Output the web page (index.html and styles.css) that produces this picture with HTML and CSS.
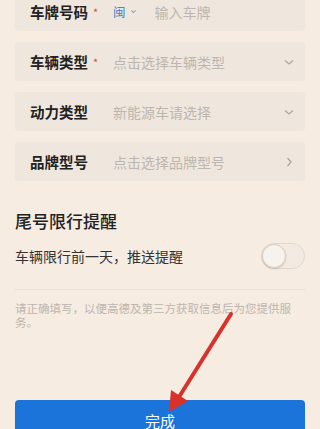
FILE: index.html
```html
<!DOCTYPE html>
<html lang="zh-CN">
  <head>
    <meta charset="UTF-8" />
    <meta name="viewport" content="width=device-width, initial-scale=1.0" />
    <title>车辆信息</title>
    <link rel="stylesheet" href="styles.css">
  </head>
  <body>
    <main class="page">
      <div class="form-list">
        <div class="form-row">
          <span class="form-label">车牌号码<i class="required">*</i></span>
          <span class="plate-prefix">闽
            <svg class="mini-arrow" viewBox="0 0 8 8" width="7" height="7"><path d="M1.5 2.8 L4 5.3 L6.5 2.8" fill="none" stroke="#8aa6c8" stroke-width="1.2"/></svg>
          </span>
          <span class="form-value">输入车牌</span>
        </div>
        <div class="form-row">
          <span class="form-label">车辆类型<i class="required">*</i></span>
          <span class="form-value">点击选择车辆类型</span>
          <svg class="row-icon" viewBox="0 0 12 12" width="12" height="12"><path d="M2 4.5 L6 8 L10 4.5" fill="none" stroke="#aea69d" stroke-width="1.3"/></svg>
        </div>
        <div class="form-row">
          <span class="form-label">动力类型</span>
          <span class="form-value">新能源车请选择</span>
          <svg class="row-icon" viewBox="0 0 12 12" width="12" height="12"><path d="M2 4.5 L6 8 L10 4.5" fill="none" stroke="#aea69d" stroke-width="1.3"/></svg>
        </div>
        <div class="form-row">
          <span class="form-label">品牌型号</span>
          <span class="form-value">点击选择品牌型号</span>
          <svg class="row-icon" viewBox="0 0 12 12" width="12" height="12"><path d="M4.5 2 L8 6 L4.5 10" fill="none" stroke="#aea69d" stroke-width="1.3"/></svg>
        </div>
      </div>

      <h2 class="section-title">尾号限行提醒</h2>
      <div class="switch-row">
        <span>车辆限行前一天，推送提醒</span>
        <span class="switch"><span class="switch-knob"></span></span>
      </div>

      <p class="note">请正确填写，以便高德及第三方获取信息后为您提供服务。</p>

      <button class="submit-button">完成</button>
    </main>

    <svg class="annotation" viewBox="0 0 320 429" width="320" height="429">
      <line x1="231" y1="314" x2="179" y2="397" stroke="#d8322b" stroke-width="4" stroke-linecap="round"/>
      <polygon points="169,412 171,390 188,401" fill="#d8322b"/>
    </svg>
  </body>
</html>
```

FILE: styles.css
```css
* {
  margin: 0;
  padding: 0;
  box-sizing: border-box;
}

:root {
  --bg: #f6ece2;
  --row-bg: #efe7dd;
  --text: #222222;
  --muted: #bdb6ae;
  --blue: #1a74d9;
  --red: #e0483f;
}

body {
  width: 320px;
  height: 429px;
  overflow: hidden;
  position: relative;
  background-color: var(--bg);
  color: var(--text);
  font-family: "Noto Sans CJK SC", "Noto Sans", sans-serif;
}

.page {
  padding: 0 15px;
}

.form-list {
  display: flex;
  flex-direction: column;
  gap: 11px;
  margin-top: -8px;
}

.form-row {
  height: 39px;
  display: flex;
  align-items: center;
  padding: 0 10px 0 15px;
  background-color: var(--row-bg);
  border-radius: 3px;
}

.form-label {
  width: 83px;
  flex-shrink: 0;
  font-size: 14.5px;
  font-weight: bold;
  color: var(--text);
  display: flex;
  align-items: center;
}

.required {
  font-style: normal;
  color: var(--red);
  font-size: 11px;
  font-weight: normal;
  margin-left: 5px;
}

.plate-prefix {
  display: flex;
  align-items: center;
  gap: 4px;
  color: #4a86c8;
  font-size: 12.5px;
  margin-right: 18px;
}

.form-value {
  flex: 1;
  font-size: 14px;
  color: var(--muted);
}

.row-icon {
  flex-shrink: 0;
}

.section-title {
  margin-top: 27px;
  font-size: 17px;
  font-weight: 500;
  line-height: 26px;
}

.switch-row {
  margin-top: 9px;
  display: flex;
  align-items: center;
  justify-content: space-between;
  font-size: 14px;
  color: #333333;
  padding-bottom: 20px;
  border-bottom: 1px solid #e9dfd4;
}

.switch {
  width: 44px;
  height: 26px;
  border-radius: 13px;
  border: 1px solid #e1d8ce;
  background-color: #f3ebe2;
  display: flex;
  align-items: center;
}

.switch-knob {
  width: 24px;
  height: 24px;
  border-radius: 50%;
  background-color: #f8f2ec;
  border: 1px solid #d8cfc5;
  box-shadow: 0 1px 2px rgba(0, 0, 0, 0.15);
}

.note {
  margin-top: 11px;
  font-size: 11.5px;
  line-height: 14px;
  color: var(--muted);
  padding-right: 10px;
}

.submit-button {
  display: block;
  width: 100%;
  height: 40px;
  margin-top: 71px;
  border: none;
  border-radius: 4px;
  background-color: var(--blue);
  color: white;
  font-size: 15px;
  font-family: "Noto Sans CJK SC", "Noto Sans", sans-serif;
}

.annotation {
  position: absolute;
  top: 0;
  left: 0;
  pointer-events: none;
}
```
